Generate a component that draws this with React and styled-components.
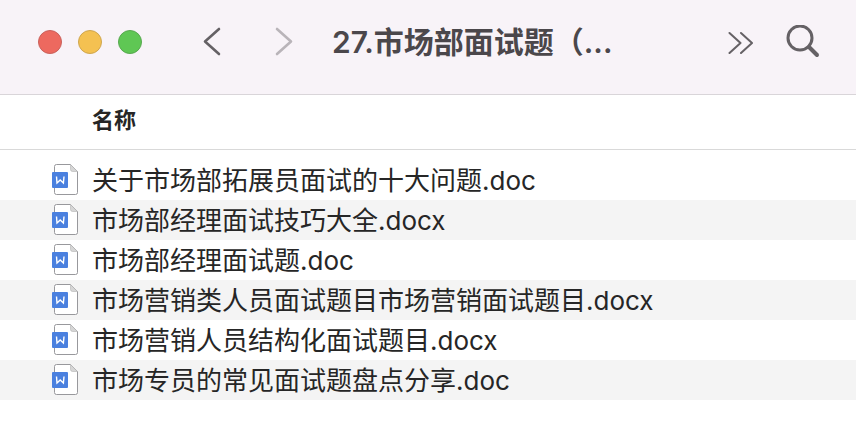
import React from 'react'
import styled, { createGlobalStyle } from 'styled-components'

const files = [
  '关于市场部拓展员面试的十大问题.doc',
  '市场部经理面试技巧大全.docx',
  '市场部经理面试题.doc',
  '市场营销类人员面试题目市场营销面试题目.docx',
  '市场营销人员结构化面试题目.docx',
  '市场专员的常见面试题盘点分享.doc',
]

const lights = [
  { label: '关闭', color: '#ed695f', border: '#c9615c' },
  { label: '最小化', color: '#f4c151', border: '#cfa64f' },
  { label: '缩放', color: '#5fc754', border: '#58a850' },
]

const GlobalStyle = createGlobalStyle`
  body {
    margin: 0;
    background: #fff;
    color: #262626;
    font-family: Inter, "Noto Sans CJK SC", sans-serif;
  }
`

const Toolbar = styled.header`
  display: flex;
  align-items: center;
  box-sizing: border-box;
  height: 95px;
  padding: 0 36px 10px 38px;
  background: #f8f3f8;
  border-bottom: 1px solid #d9d5d9;
`

const Lights = styled.div`
  display: flex;
  gap: 16px;
`

const Light = styled.button`
  width: 24px;
  height: 24px;
  padding: 0;
  border: 1px solid ${props => props.$border};
  border-radius: 50%;
  background: ${props => props.$color};
`

const Nav = styled.nav`
  display: flex;
  gap: 32px;
  margin: 0 28px 0 50px;
`

const Actions = styled.div`
  display: flex;
  align-items: center;
  gap: 26px;
`

const IconButton = styled.button`
  display: flex;
  align-items: center;
  justify-content: center;
  width: ${props => props.$width}px;
  height: 40px;
  padding: 0;
  border: 0;
  background: none;
  color: ${props => (props.disabled ? '#b9b4b9' : '#656165')};

  svg {
    fill: none;
    stroke: currentColor;
    stroke-linecap: round;
    stroke-linejoin: round;
  }
`

const Title = styled.h1`
  flex: 1;
  min-width: 0;
  margin: 0;
  overflow: hidden;
  color: #4b474b;
  font-size: 30px;
  font-weight: 600;
  line-height: 40px;
  white-space: nowrap;
`

const FileTable = styled.table`
  width: 100%;
  border-collapse: separate;
  border-spacing: 0;
`

const ColumnHead = styled.th`
  box-sizing: border-box;
  height: 55px;
  padding: 0 16px 4px 92px;
  border-bottom: 1px solid #d9d9d9;
  font-size: 22px;
  font-weight: 700;
  line-height: 32px;
  text-align: left;
`

const FileList = styled.tbody`
  &::before {
    content: '';
    display: block;
    height: 10px;
  }
`

const FileRow = styled.tr`
  &:nth-child(even) {
    background: #f4f4f4;
  }
`

const FileCell = styled.td`
  height: 40px;
  padding: 0 16px 0 52px;
`

const FileEntry = styled.div`
  display: flex;
  align-items: center;
  gap: 14px;

  svg {
    flex: none;
  }
`

const FileName = styled.span`
  padding-top: 2px;
  font-size: 26px;
  line-height: 38px;
  white-space: nowrap;
`

const DocIcon = () => (
  <svg width="26" height="32" viewBox="0 0 26 32" aria-hidden="true">
    <path
      d="M4.5 .5H18.5L25.5 7.5V28.5Q25.5 30.5 23.5 30.5H4.5Q2.5 30.5 2.5 28.5V2.5Q2.5 .5 4.5 .5Z"
      fill="#fff"
      stroke="#98989c"
    />
    <path d="M18.5 .5V5.5Q18.5 7.5 20.5 7.5H25.5Z" fill="#d6d6d6" stroke="#b4b4b4" strokeWidth=".6" />
    <rect y="8" width="16" height="16" rx="1" fill="#4a80df" />
    <path d="M4.500 12.500L5 19L8.200 16L11.400 19L12 12.500" fill="none" stroke="#fff" strokeWidth="1.4" />
  </svg>
)

const App = () => {
  return (
    <>
      <GlobalStyle />
      <Toolbar>
        <Lights>
          {lights.map(light => (
            <Light key={light.label} aria-label={light.label} $color={light.color} $border={light.border} />
          ))}
        </Lights>
        <Nav>
          <IconButton $width={40} aria-label="后退">
            <svg width="18" height="30" viewBox="0 0 18 30" strokeWidth="2.6">
              <path d="M16 2L2 14.500L16 27" />
            </svg>
          </IconButton>
          <IconButton $width={40} aria-label="前进" disabled>
            <svg width="18" height="30" viewBox="0 0 18 30" strokeWidth="2.6">
              <path d="M2 2L16 14.500L2 27" />
            </svg>
          </IconButton>
        </Nav>
        <Title>27.市场部面试题（...</Title>
        <Actions>
          <IconButton $width={40} aria-label="更多">
            <svg width="26" height="24" viewBox="0 0 26 24" strokeWidth="2">
              <path d="M2.500 3L13.500 13L2.500 23M14 3L25 13L14 23" />
            </svg>
          </IconButton>
          <IconButton $width={34} aria-label="搜索">
            <svg width="34" height="34" viewBox="0 0 34 34" strokeWidth="3">
              <circle cx="14" cy="13" r="12" />
              <path d="M23 22L31 30" strokeWidth="4" />
            </svg>
          </IconButton>
        </Actions>
      </Toolbar>
      <FileTable>
        <thead>
          <tr>
            <ColumnHead scope="col">名称</ColumnHead>
          </tr>
        </thead>
        <FileList>
          {files.map(file => (
            <FileRow key={file}>
              <FileCell>
                <FileEntry>
                  <DocIcon />
                  <FileName>{file}</FileName>
                </FileEntry>
              </FileCell>
            </FileRow>
          ))}
        </FileList>
      </FileTable>
    </>
  )
}

export default App
